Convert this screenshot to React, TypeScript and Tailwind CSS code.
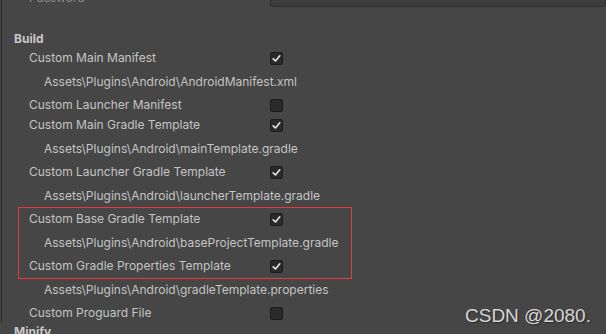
import React from "react";

type Row =
  | { kind: "toggle"; label: string; checked: boolean }
  | { kind: "path"; text: string };

const topRows: Row[] = [
  { kind: "toggle", label: "Custom Main Manifest", checked: true },
  { kind: "path", text: "Assets\\Plugins\\Android\\AndroidManifest.xml" },
  { kind: "toggle", label: "Custom Launcher Manifest", checked: false },
  { kind: "toggle", label: "Custom Main Gradle Template", checked: true },
  { kind: "path", text: "Assets\\Plugins\\Android\\mainTemplate.gradle" },
  { kind: "toggle", label: "Custom Launcher Gradle Template", checked: true },
  { kind: "path", text: "Assets\\Plugins\\Android\\launcherTemplate.gradle" },
];

const boxedRows: Row[] = [
  { kind: "toggle", label: "Custom Base Gradle Template", checked: true },
  { kind: "path", text: "Assets\\Plugins\\Android\\baseProjectTemplate.gradle" },
  { kind: "toggle", label: "Custom Gradle Properties Template", checked: true },
];

const bottomRows: Row[] = [
  { kind: "path", text: "Assets\\Plugins\\Android\\gradleTemplate.properties" },
  { kind: "toggle", label: "Custom Proguard File", checked: false },
];

function Checkbox({ checked }: { checked: boolean }) {
  return (
    <div className="w-[13px] h-[13px] rounded-[2px] bg-[#2a2a2a] border border-[#1c1c1c] flex items-center justify-center">
      {checked && (
        <svg width="9" height="9" viewBox="0 0 9 9" fill="none">
          <path
            d="M1.2 4.8 L3.5 7 L7.8 1.8"
            stroke="#e6e6e6"
            strokeWidth="1.6"
            strokeLinecap="round"
            strokeLinejoin="round"
          />
        </svg>
      )}
    </div>
  );
}

function SettingRow({ row }: { row: Row }) {
  if (row.kind === "path") {
    return (
      <div className="h-[27px] flex items-center pl-[42px] text-[12px] text-[#c4c4c4]">
        {row.text}
      </div>
    );
  }
  return (
    <div className="h-[20px] flex items-center pl-[27px] text-[12px] text-[#c4c4c4]">
      <span className="w-[241px]">{row.label}</span>
      <Checkbox checked={row.checked} />
    </div>
  );
}

export default function App() {
  return (
    <div className="relative w-[606px] h-[334px] overflow-hidden bg-[#464646] font-['Inter',sans-serif]">
      <div className="h-full ml-px border-l border-[#2b2b2b]">
        <div className="flex flex-col -mt-[11px]">
          {/* Password */}
          <div className="h-[18px] flex items-center pl-[27px] text-[12px] text-[#8a8a8a]">
            <span className="w-[241px]">Password</span>
            <div className="flex-1 h-[18px] rounded-[3px] bg-[#3d3d3d] border border-[#2e2e2e]" />
          </div>

          {/* Build */}
          <div className="h-[18px] mt-[23px] flex items-center pl-[12px] text-[12px] font-bold text-[#c8c8c8]">
            Build
          </div>

          {topRows.map((r, i) => (
            <SettingRow key={i} row={r} />
          ))}

          <div className="relative">
            {boxedRows.map((r, i) => (
              <SettingRow key={i} row={r} />
            ))}
            {/* red highlight box */}
            <div className="absolute left-[16px] w-[334px] -top-[2px] -bottom-[3px] border border-[#e23a3f]" />
          </div>

          {bottomRows.map((r, i) => (
            <SettingRow key={i} row={r} />
          ))}

          {/* Minify */}
          <div className="h-[18px] flex items-center pl-[12px] text-[12px] font-bold text-[#c8c8c8]">
            Minify
          </div>
        </div>
      </div>

      {/* watermark */}
      <div className="absolute left-[465px] top-[304px] text-[19px] leading-[24px] text-[#d6d6d6] font-['Liberation_Sans',sans-serif] [text-shadow:1px_1px_1px_#2a2a2a]">
        CSDN @2080.
      </div>
    </div>
  );
}
